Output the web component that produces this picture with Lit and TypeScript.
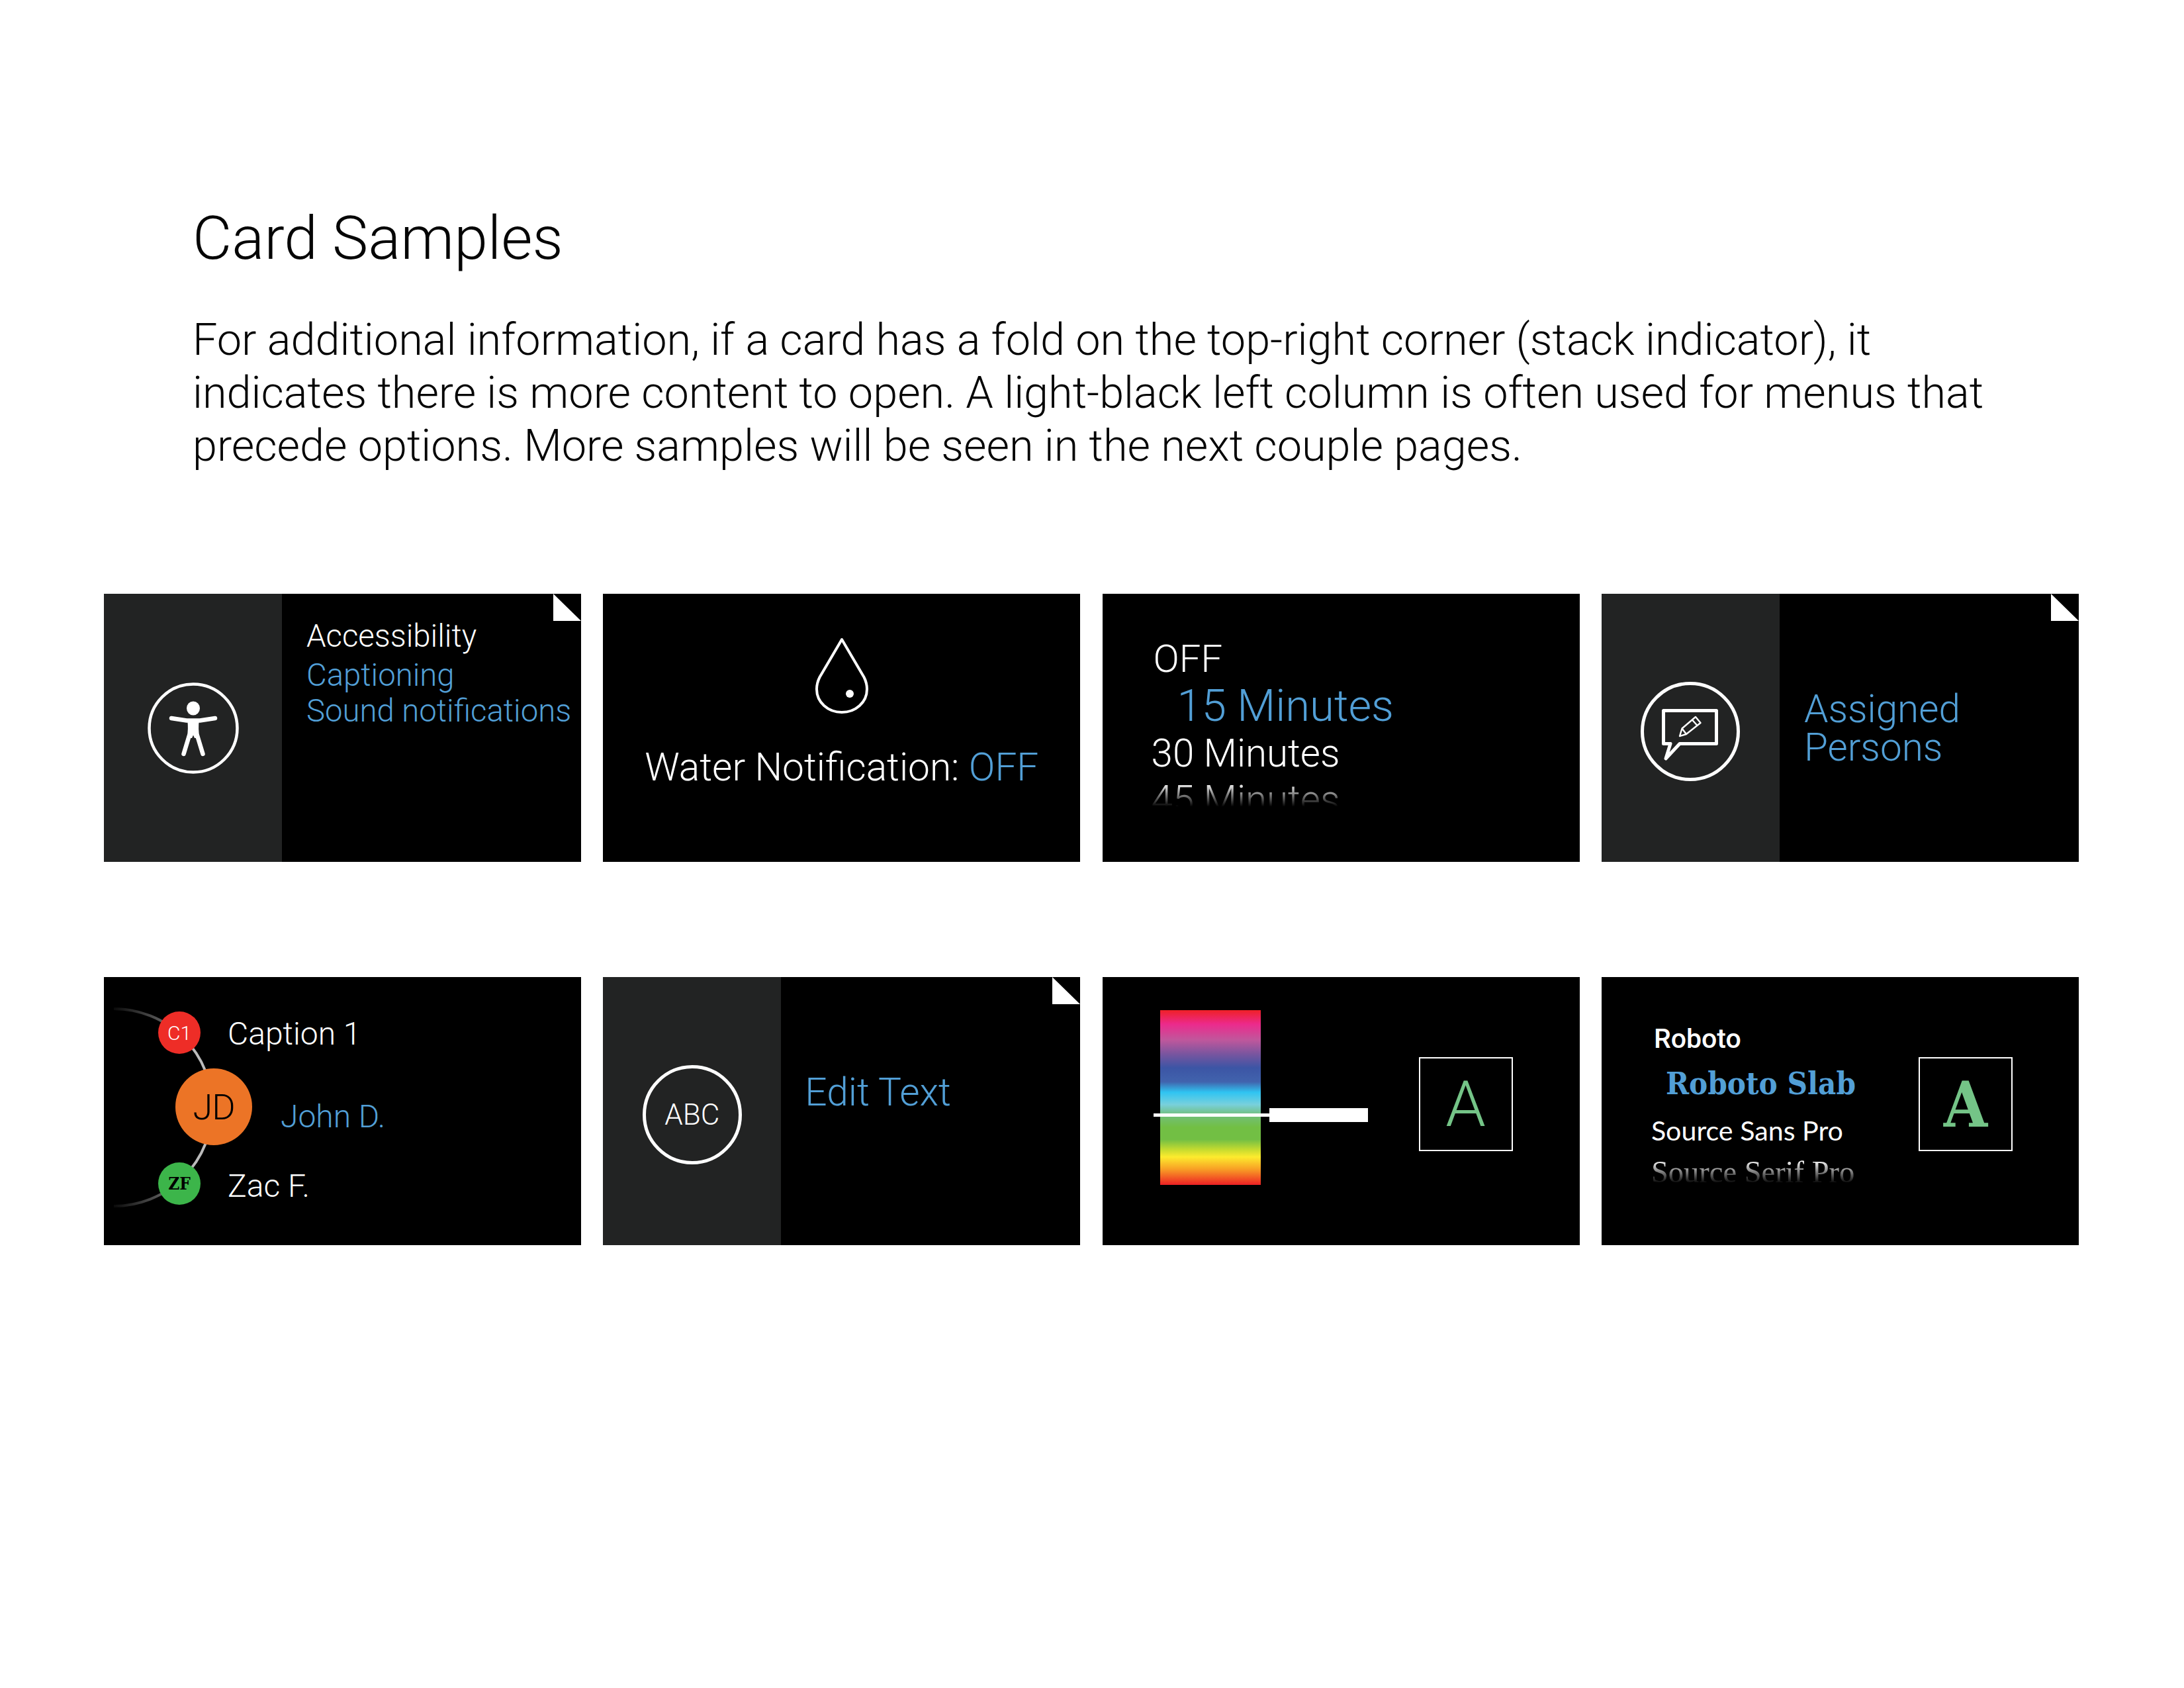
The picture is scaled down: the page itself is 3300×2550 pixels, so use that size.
import { LitElement, html, css, svg } from "lit";
import { customElement } from "lit/decorators.js";

const fold = html`<svg class="fold" viewBox="0 0 42 41"><path d="M0 0L42 41H0Z" fill="#fff" /></svg>`;

const accessIcon = html`<svg class="ring138" viewBox="0 0 138 138">
  <circle cx="69" cy="69" r="66.5" fill="none" stroke="#fff" stroke-width="4.5" />
  <ellipse cx="69" cy="39" rx="10" ry="10.500" fill="#fff" />
  <path d="M36 54L59 57.500H79L102 54" fill="none" stroke="#fff" stroke-width="6.500" stroke-linecap="round" stroke-linejoin="round" />
  <path d="M60 56H78C76.500 66 77 74 78.500 84H71L69 79.500L67 84H59.500C61 74 61.500 66 60 56Z" fill="#fff" />
  <path d="M63 80L54.500 108M75 80L83.500 108" fill="none" stroke="#fff" stroke-width="6.500" stroke-linecap="round" />
</svg>`;

const bubbleIcon = html`<svg class="ring150" viewBox="0 0 150 150">
  <circle cx="75" cy="75" r="72.5" fill="none" stroke="#fff" stroke-width="5" />
  <path d="M34.500 43.500H114.500V93.500H59L38 116L45 93.500H34.500Z" fill="none" stroke="#fff" stroke-width="5" stroke-linejoin="round" />
  <path d="M59 82L62.500 70.500L83 53L90.500 62L69 79ZM62.500 70.500L69 79M78 57.500L85.500 66" fill="none" stroke="#fff" stroke-width="2.400" stroke-linejoin="round" />
</svg>`;

const dropIcon = html`<svg class="drop" viewBox="0 0 80 116">
  <path d="M40 3L6.500 60C3.500 66 2 72 2 78C2 98 19 113 40 113C61 113 78 98 78 78C78 72 76.500 66 73.500 60Z" fill="none" stroke="#fff" stroke-width="4" stroke-linejoin="round" />
  <ellipse cx="52" cy="85" rx="6" ry="6" fill="#fff" />
</svg>`;

const arc = html`<svg class="arc" viewBox="0 0 200 310">
  <defs>
    <linearGradient id="arcfade" gradientUnits="userSpaceOnUse" x1="6" y1="0" x2="160" y2="0">
      <stop offset="0" stop-color="#000" />
      <stop offset="0.5" stop-color="#555" />
      <stop offset="0.85" stop-color="#bbb" />
      <stop offset="1" stop-color="#bbb" />
    </linearGradient>
  </defs>
  ${svg`<path d="M15 6A149 149 0 0 1 15 304" fill="none" stroke="url(#arcfade)" stroke-width="4" />`}
</svg>`;

@customElement("app-root")
export class AppRoot extends LitElement {
  static styles = css`
    :host {
      display: block;
      width: 3300px;
      height: 2550px;
      background: #fff;
      font-family: Roboto, sans-serif;
      font-weight: 300;
      color: #fff;
      overflow: hidden;
    }
    .page {
      padding: 303px 0 0 157px;
    }
    .head {
      padding-left: 134px;
      width: 2900px;
      color: #050505;
    }
    h1 {
      margin: 0;
      font-size: 91.300px;
      line-height: 114px;
      font-weight: 300;
    }
    .head p {
      margin: 56px 0 0;
      font-size: 66.600px;
      line-height: 80px;
      font-weight: 300;
      white-space: nowrap;
    }
    .grid {
      display: grid;
      grid-template-columns: repeat(4, 721px);
      grid-auto-rows: 405px;
      column-gap: 33.3px;
      row-gap: 174px;
      margin-top: 184px;
    }
    .card {
      position: relative;
      background: #000;
      overflow: hidden;
      display: flex;
    }
    .fold {
      position: absolute;
      top: 0;
      right: 0;
      width: 42px;
      height: 41px;
      display: block;
    }
    .side {
      width: 269px;
      flex: none;
      box-sizing: border-box;
      background: #222323;
      display: flex;
      align-items: center;
      justify-content: center;
    }
    .side.low {
      padding-top: 10px;
    }
    .main {
      flex: 1;
      min-width: 0;
    }
    .blue {
      color: #529fd6;
    }
    .ring138 {
      width: 138px;
      height: 138px;
      display: block;
    }
    .ring150 {
      width: 150px;
      height: 150px;
      display: block;
      flex: none;
    }
    .a11y {
      padding: 37px 0 0 37px;
      font-size: 47.300px;
      line-height: 54px;
      white-space: nowrap;
    }
    .a11y div:first-child {
      margin-bottom: 5px;
    }
    .water {
      flex: 1;
      display: flex;
      flex-direction: column;
      align-items: center;
      padding-top: 66px;
    }
    .drop {
      width: 80px;
      height: 116px;
      display: block;
    }
    .water-text {
      margin-top: 44px;
      font-size: 58.600px;
      line-height: 72px;
      white-space: nowrap;
    }
    .minutes {
      padding: 64px 0 0 77px;
      font-size: 58.300px;
    }
    .minutes div {
      white-space: nowrap;
    }
    .m-off {
      line-height: 68px;
      font-size: 58px;
    }
    .m-15 {
      font-size: 67px;
      line-height: 74px;
      padding-left: 36px;
    }
    .m-30 {
      line-height: 70px;
      margin-left: -3px;
    }
    .m-45 {
      margin-left: -3px;
      line-height: 70px;
      height: 48px;
      overflow: hidden;
      -webkit-mask-image: linear-gradient(#fff 20%, transparent 95%);
      mask-image: linear-gradient(#fff 20%, transparent 95%);
    }
    .assigned {
      padding: 145px 0 0 37px;
      font-size: 58.400px;
      line-height: 58px;
    }
    .arc {
      position: absolute;
      left: 0;
      top: 42px;
      width: 200px;
      height: 310px;
    }
    .dot {
      position: absolute;
      border-radius: 50%;
      display: flex;
      align-items: center;
      justify-content: center;
    }
    .c1 {
      left: 82px;
      top: 52px;
      width: 64px;
      height: 64px;
      background: #ee2d27;
      font-size: 30px;
      font-weight: 300;
    }
    .jd {
      left: 108px;
      top: 138px;
      width: 116px;
      height: 116px;
      background: #ec7426;
      color: #000;
      font-size: 54px;
      letter-spacing: -1px;
    }
    .zf {
      left: 82px;
      top: 280px;
      width: 64px;
      height: 64px;
      background: #3cb54a;
      color: #000;
      font-family: "DejaVu Serif", serif;
      font-stretch: condensed;
      font-weight: 700;
      font-size: 26px;
    }
    .people {
      position: absolute;
      left: 187px;
      top: 0;
      font-size: 48px;
      line-height: 60px;
      padding-top: 56px;
      white-space: nowrap;
    }
    .people .john {
      margin: 65px 0 0 80px;
    }
    .people .zac {
      margin-top: 45px;
    }
    .abc {
      font-size: 44px;
    }
    .ring-text {
      width: 150px;
      height: 150px;
      border: 5px solid #fff;
      border-radius: 50%;
      box-sizing: border-box;
      display: flex;
      align-items: center;
      justify-content: center;
    }
    .edit {
      padding: 138px 0 0 36px;
      font-size: 58.700px;
      line-height: 72px;
    }
    .rainbow {
      position: absolute;
      left: 87px;
      top: 50px;
      width: 152px;
      height: 264px;
      background: linear-gradient(
        #ef2027 0%,
        #ec2a8c 8%,
        #c0579c 17%,
        #7a559f 25%,
        #3c55a5 33%,
        #4163ad 41%,
        #2fc4f2 47%,
        #78d0dc 54%,
        #72bf7a 60%,
        #72bf44 67%,
        #72bf44 74%,
        #c8dc2f 80%,
        #fdeb2e 84%,
        #f89f25 91%,
        #ed2024 100%
      );
    }
    .line {
      position: absolute;
      left: 77px;
      top: 206px;
      width: 175px;
      height: 5px;
      background: #fff;
    }
    .bar {
      position: absolute;
      left: 252px;
      top: 198px;
      width: 149px;
      height: 21px;
      background: #fff;
    }
    .abox {
      position: absolute;
      top: 121px;
      width: 142px;
      height: 142px;
      box-sizing: border-box;
      border: 2.500px solid #fff;
      color: #74c487;
      display: flex;
      align-items: center;
      justify-content: center;
      font-size: 97px;
    }
    .abox.slab {
      font-family: "DejaVu Serif", serif;
      font-stretch: condensed;
      font-size: 95px;
      font-weight: 700;
    }
    .fonts {
      padding: 68px 0 0 75px;
      white-space: nowrap;
    }
    .f-roboto {
      font-size: 41px;
      font-weight: 500;
      line-height: 50px;
      margin-left: 4px;
    }
    .f-slab {
      font-family: "DejaVu Serif", serif;
      font-stretch: condensed;
      font-weight: 700;
      font-size: 47px;
      line-height: 60px;
      margin: 13px 0 0 22px;
      color: #529fd6;
    }
    .f-sans {
      font-family: Lato, sans-serif;
      font-weight: 400;
      font-size: 41.200px;
      line-height: 50px;
      margin-top: 15px;
    }
    .f-serif {
      font-family: "Liberation Serif", serif;
      font-weight: 400;
      font-size: 46.500px;
      line-height: 50px;
      height: 44px;
      overflow: hidden;
      margin-top: 14px;
      -webkit-mask-image: linear-gradient(#fff 15%, transparent 95%);
      mask-image: linear-gradient(#fff 15%, transparent 95%);
    }
  `;

  render() {
    return html`
      <div class="page">
        <div class="head">
          <h1>Card Samples</h1>
          <p>
            For additional information, if a card has a fold on the top-right corner (stack indicator), it<br />
            indicates there is more content to open. A light-black left column is often used for menus that<br />
            precede options. More samples will be seen in the next couple pages.
          </p>
        </div>
        <div class="grid">
          <div class="card">
            <div class="side">${accessIcon}</div>
            <div class="main a11y">
              <div>Accessibility</div>
              <div class="blue">Captioning</div>
              <div class="blue">Sound notifications</div>
            </div>
            ${fold}
          </div>
          <div class="card">
            <div class="water">
              ${dropIcon}
              <div class="water-text">Water Notification: <span class="blue">OFF</span></div>
            </div>
          </div>
          <div class="card">
            <div class="main minutes">
              <div class="m-off">OFF</div>
              <div class="m-15 blue">15 Minutes</div>
              <div class="m-30">30 Minutes</div>
              <div class="m-45">45 Minutes</div>
            </div>
          </div>
          <div class="card">
            <div class="side low">${bubbleIcon}</div>
            <div class="main assigned blue">Assigned<br />Persons</div>
            ${fold}
          </div>
          <div class="card">
            ${arc}
            <div class="dot c1">C1</div>
            <div class="dot jd">JD</div>
            <div class="dot zf">ZF</div>
            <div class="people">
              <div>Caption 1</div>
              <div class="john blue">John D.</div>
              <div class="zac">Zac F.</div>
            </div>
          </div>
          <div class="card">
            <div class="side low">
              <div class="ring-text abc">ABC</div>
            </div>
            <div class="main edit blue">Edit Text</div>
            ${fold}
          </div>
          <div class="card">
            <div class="rainbow"></div>
            <div class="line"></div>
            <div class="bar"></div>
            <div class="abox" style="left:478px">A</div>
          </div>
          <div class="card">
            <div class="main fonts">
              <div class="f-roboto">Roboto</div>
              <div class="f-slab">Roboto Slab</div>
              <div class="f-sans">Source Sans Pro</div>
              <div class="f-serif">Source Serif Pro</div>
            </div>
            <div class="abox slab" style="left:479px">A</div>
          </div>
        </div>
      </div>
    `;
  }
}
